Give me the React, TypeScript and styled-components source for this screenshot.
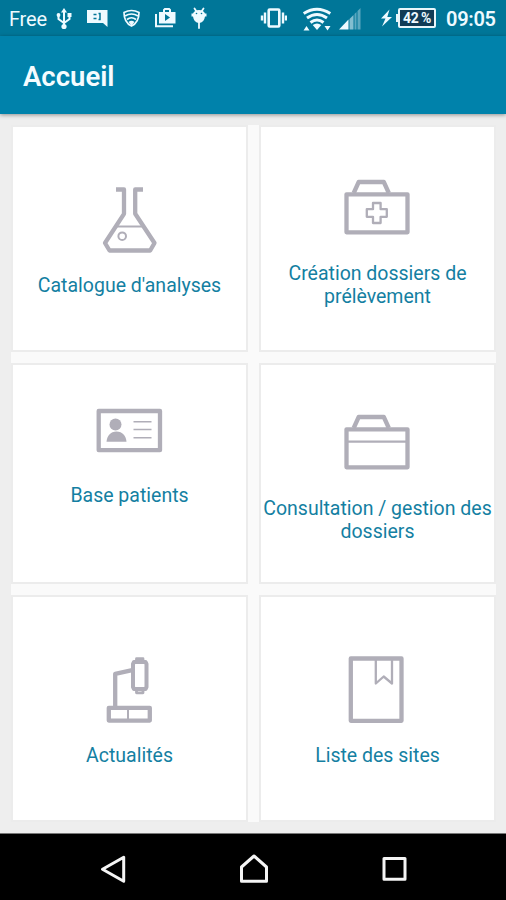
import React from "react";
import styled, { createGlobalStyle } from "styled-components";

const GlobalStyle = createGlobalStyle`
  * { box-sizing: border-box; }
  body { margin: 0; font-family: Roboto, "Liberation Sans", sans-serif; }
`;

const Screen = styled.div`
  width: 506px;
  height: 900px;
  display: flex;
  flex-direction: column;
  background: #eeeeee;
  overflow: hidden;
`;

const StatusBar = styled.header`
  height: 36px;
  flex: none;
  display: flex;
  align-items: center;
  justify-content: space-between;
  padding: 0 10px 0 9px;
  background: #007698;
  color: #eefaff;
`;

const StatusGroup = styled.div`
  display: flex;
  align-items: center;
  height: 36px;
`;

const StatusIcon = styled.svg<{ $gap: number }>`
  display: block;
  flex: none;
  height: 36px;
  margin-left: ${(p) => p.$gap}px;
  fill: currentColor;
`;

const Carrier = styled.span`
  width: 38px;
  font-size: 20px;
  line-height: 36px;
  padding-top: 2px;
  letter-spacing: -0.2px;
`;

const Battery = styled.div`
  position: relative;
  width: 38px;
  height: 20px;
  margin-left: 5px;
  border: 2px solid #e8f6fb;
  border-radius: 2px;
  background: #103c56;
  font-size: 14px;
  font-weight: 700;
  line-height: 17px;
  letter-spacing: -0.2px;
  word-spacing: -1px;
  text-align: center;
  white-space: nowrap;

  &::before {
    content: "";
    position: absolute;
    left: -4px;
    top: 4px;
    width: 2px;
    height: 8px;
    background: #e8f6fb;
  }
`;

const Clock = styled.span`
  width: 50px;
  margin-left: 10px;
  padding-top: 2px;
  font-size: 20px;
  font-weight: 600;
  line-height: 34px;
  letter-spacing: -0.3px;
`;

const AppBar = styled.div`
  height: 78px;
  flex: none;
  display: flex;
  align-items: center;
  padding: 4px 23px 0;
  background: #0082ab;
  box-shadow: 0 1px 4px rgba(0, 0, 0, 0.4);
`;

const Title = styled.h1`
  margin: 0;
  color: #f4fcff;
  font-size: 27.5px;
  font-weight: 600;
  line-height: 36px;
`;

const TileGrid = styled.main`
  display: grid;
  grid-template-columns: 237px 237px;
  grid-template-rows: 227px 221px 227px;
  gap: 11px;
  width: 485px;
  margin: 11px 0 0 11px;
  background: #fafafa;
`;

const Tile = styled.button<{ $raised?: boolean }>`
  display: flex;
  flex-direction: column;
  align-items: center;
  justify-content: center;
  margin: 0;
  padding: 0 0 ${(p) => (p.$raised ? 50 : 0)}px;
  border: 2px solid #ececec;
  background: #ffffff;
  font-family: inherit;
`;

const TileIcon = styled.svg`
  display: block;
  flex: none;
  width: 80px;
  height: 80px;
  margin: 0 1px 13px 0;
  fill: none;
  stroke: #b0aeb8;
  stroke-width: 4.3;
  stroke-linejoin: round;
`;

const Label = styled.span`
  color: #147fa2;
  font-size: 19.5px;
  line-height: 23px;
  text-align: center;
  white-space: pre;
`;

const NavBar = styled.nav`
  height: 67px;
  flex: none;
  margin-top: auto;
  display: flex;
  justify-content: space-between;
  padding: 19px 95px 0 97px;
  border-top: 1px solid #777777;
  background: #000000;
`;

const NavIcon = styled.svg`
  width: 32px;
  height: 32px;
  fill: none;
  stroke: #f5f5f5;
  stroke-width: 3;
  stroke-linejoin: round;
`;

const Flask = () => (
  <TileIcon viewBox="0 0 80 80">
    <path d="M27 8.5h8v24.300L16 62l4.500 7.500h40.700l4.300-7.500-19.300-29.200V8.500H54" />
    <path d="M27 45.500h28" strokeWidth="2" />
    <circle cx="33.200" cy="55.200" r="3.800" strokeWidth="2" />
  </TileIcon>
);

const CaseShape = () => (
  <>
    <rect x="9.500" y="25.300" width="61" height="38" />
    <path d="M16.700 24 21.700 13h25.100l5 11" />
  </>
);

const FirstAid = () => (
  <TileIcon viewBox="0 0 80 80">
    <CaseShape />
    <path
      d="M36 34h7.600v6.200h6.200v7.600h-6.200V54H36v-6.200h-6.200v-7.600H36z"
      strokeWidth="2.300"
    />
  </TileIcon>
);

const Briefcase = () => (
  <TileIcon viewBox="0 0 80 80">
    <CaseShape />
    <path d="M10 37.700h60" strokeWidth="2.300" />
  </TileIcon>
);

const IdCard = () => (
  <TileIcon viewBox="0 0 80 80">
    <rect x="9.700" y="20" width="61.300" height="39.200" />
    <g fill="#b0aeb8" stroke="none">
      <circle cx="26.500" cy="33.500" r="6" />
      <path d="M17.500 50.800c.4-6 4-10.300 10-10.300s9.600 4.300 10 10.300z" />
    </g>
    <path
      d="M44.500 30.800h18M44.500 38.500h18M44.500 46.800h18"
      strokeWidth="1.500"
    />
  </TileIcon>
);

const Microscope = () => (
  <TileIcon viewBox="0 0 80 80">
    <rect x="19.800" y="56.800" width="41" height="12.800" />
    <path d="M39 57v12" strokeWidth="2" />
    <path d="M26.200 56V22.800l17-3.600" />
    <path d="M45 11h11.500l1 2v23l-1 2H45l-1-2V13z" strokeWidth="4" />
    <path d="M47.500 11V7.700h6.500V11M47.500 38v3.800H54V38" strokeWidth="2.800" />
  </TileIcon>
);

const Book = () => (
  <TileIcon viewBox="0 0 80 80">
    <rect x="13.800" y="7.500" width="50.700" height="62.300" />
    <path d="M38.800 8v24.500l7.900-7 8.300 7V8" strokeWidth="2.300" />
  </TileIcon>
);

const tiles = [
  { label: "Catalogue d'analyses", icon: <Flask /> },
  { label: "Création dossiers de\nprélèvement", icon: <FirstAid /> },
  { label: "Base patients", icon: <IdCard />, raised: true },
  { label: "Consultation / gestion des\ndossiers", icon: <Briefcase /> },
  { label: "Actualités", icon: <Microscope /> },
  { label: "Liste des sites", icon: <Book /> },
];

const UsbIcon = () => (
  <StatusIcon $gap={9} width="16" viewBox="56 0 16 36">
    <path d="M64 8l3 4.500h-6z" />
    <circle cx="64" cy="26.500" r="2.600" />
    <path d="M64 11v15M58.500 15v4l5.500 4 5.500-4v-4" fill="none" stroke="currentColor" strokeWidth="2" />
    <circle cx="58.500" cy="15" r="1.900" />
    <path d="M67.500 13h4v4h-4z" />
  </StatusIcon>
);

const MessageIcon = () => (
  <StatusIcon $gap={15} width="21" viewBox="87 0 21 36">
    <path d="M87 10h20.500v17l-4.500-4H87z" />
    <path d="M93.500 14.500h3M93.500 18.500h3M98.500 13.500h1.500v6h-1.500" fill="none" stroke="#007698" strokeWidth="1.500" />
  </StatusIcon>
);

const ShieldIcon = () => (
  <StatusIcon $gap={15} width="17" viewBox="123 0 17 36">
    <g fill="none" stroke="currentColor" strokeWidth="1.700">
      <path d="M124 12.500q7.500-4 15 0c0 6-2 11-7.500 13.500-5.500-2.500-7.500-7.500-7.500-13.500z" />
      <path d="M125 16q6.500-4 13 0M127 19.500q4.500-3.500 9 0" />
    </g>
    <path d="M128.500 22q3-2.500 6 0l-3 3.500z" />
  </StatusIcon>
);

const StoreIcon = () => (
  <StatusIcon $gap={15} width="21" viewBox="155 0 21 36">
    <path d="M156 14v12.300h17" fill="none" stroke="currentColor" strokeWidth="2" />
    <path d="M159 12h4V9.500l1.500-1.500h5l1.500 1.500V12h4.500v11.500H159zm6 0h4v-2h-4z" fillRule="evenodd" />
    <path d="M165 14v7l5-3.500z" fill="#007698" />
  </StatusIcon>
);

const DroidIcon = () => (
  <StatusIcon $gap={15} width="17" viewBox="191 0 17 36">
    <path d="M194.500 8.500l2 3M203.500 8.500l-2 3M199 21v7" fill="none" stroke="currentColor" strokeWidth="1.800" strokeLinecap="round" />
    <path d="M191.500 13.500h1.500q1.500-3.500 6-3.500t6 3.500h1.500v3H205q-1 6.500-6 6.500t-6-6.500h-1.500z" />
    <circle cx="196.500" cy="13.500" r=".8" fill="#007698" />
    <circle cx="201.500" cy="13.500" r=".8" fill="#007698" />
  </StatusIcon>
);

const VibrateIcon = () => (
  <StatusIcon $gap={0} width="27" viewBox="260 0 27 36">
    <rect x="268.700" y="9.500" width="10.600" height="17" rx="1" fill="none" stroke="currentColor" strokeWidth="2.600" />
    <path d="M265 12.500v11M283 12.500v11M262 15.500v5M286 15.500v5" stroke="currentColor" strokeWidth="2.400" />
  </StatusIcon>
);

const WifiIcon = () => (
  <StatusIcon $gap={16} width="29" viewBox="303 0 29 36">
    <g fill="none" stroke="currentColor" strokeWidth="3">
      <path d="M303.700 13.500q13.300-8.500 26.600 0" />
      <path d="M307 18q10-7 20 0" />
      <path d="M310.500 22.500q6.500-5 13 0" />
    </g>
    <path d="M312.700 25q4.300-3 8.600 0l-4.300 5zM303.500 30.500l3-4.500 3 4.500zM324.500 26h6l-3 4.500z" />
  </StatusIcon>
);

const SignalIcon = () => (
  <StatusIcon $gap={7} width="22" viewBox="339 0 22 36">
    <path d="M339 29.500l9.500-10v10z" />
    <path d="M349.500 19l4-4v14.500h-4z" opacity=".55" />
    <path d="M354.500 14l2-2v17.500h-2zM357.500 11l3-3v21.500h-3z" opacity=".38" />
  </StatusIcon>
);

const BoltIcon = () => (
  <StatusIcon $gap={20} width="12" viewBox="381 0 12 36">
    <path d="M389.500 9.500l-8.500 9h4.500l-3.500 8 10-9.500h-4.700z" />
  </StatusIcon>
);

export default function App() {
  return (
    <>
      <GlobalStyle />
      <Screen>
        <StatusBar>
          <StatusGroup>
            <Carrier>Free</Carrier>
            <UsbIcon />
            <MessageIcon />
            <ShieldIcon />
            <StoreIcon />
            <DroidIcon />
          </StatusGroup>
          <StatusGroup>
            <VibrateIcon />
            <WifiIcon />
            <SignalIcon />
            <BoltIcon />
            <Battery>42 %</Battery>
            <Clock>09:05</Clock>
          </StatusGroup>
        </StatusBar>
        <AppBar>
          <Title>Accueil</Title>
        </AppBar>
        <TileGrid>
          {tiles.map((t) => (
            <Tile key={t.label} type="button" $raised={t.raised}>
              {t.icon}
              <Label>{t.label}</Label>
            </Tile>
          ))}
        </TileGrid>
        <NavBar>
          <NavIcon viewBox="97 853 32 32">
            <path d="M102.500 869.300l21.200-12v24z" />
          </NavIcon>
          <NavIcon viewBox="238 853 32 32">
            <path d="M254 856l12.500 11v14.300h-25V867z" />
          </NavIcon>
          <NavIcon viewBox="379 853 32 32">
            <rect x="384" y="858.500" width="21" height="20.800" />
          </NavIcon>
        </NavBar>
      </Screen>
    </>
  );
}
